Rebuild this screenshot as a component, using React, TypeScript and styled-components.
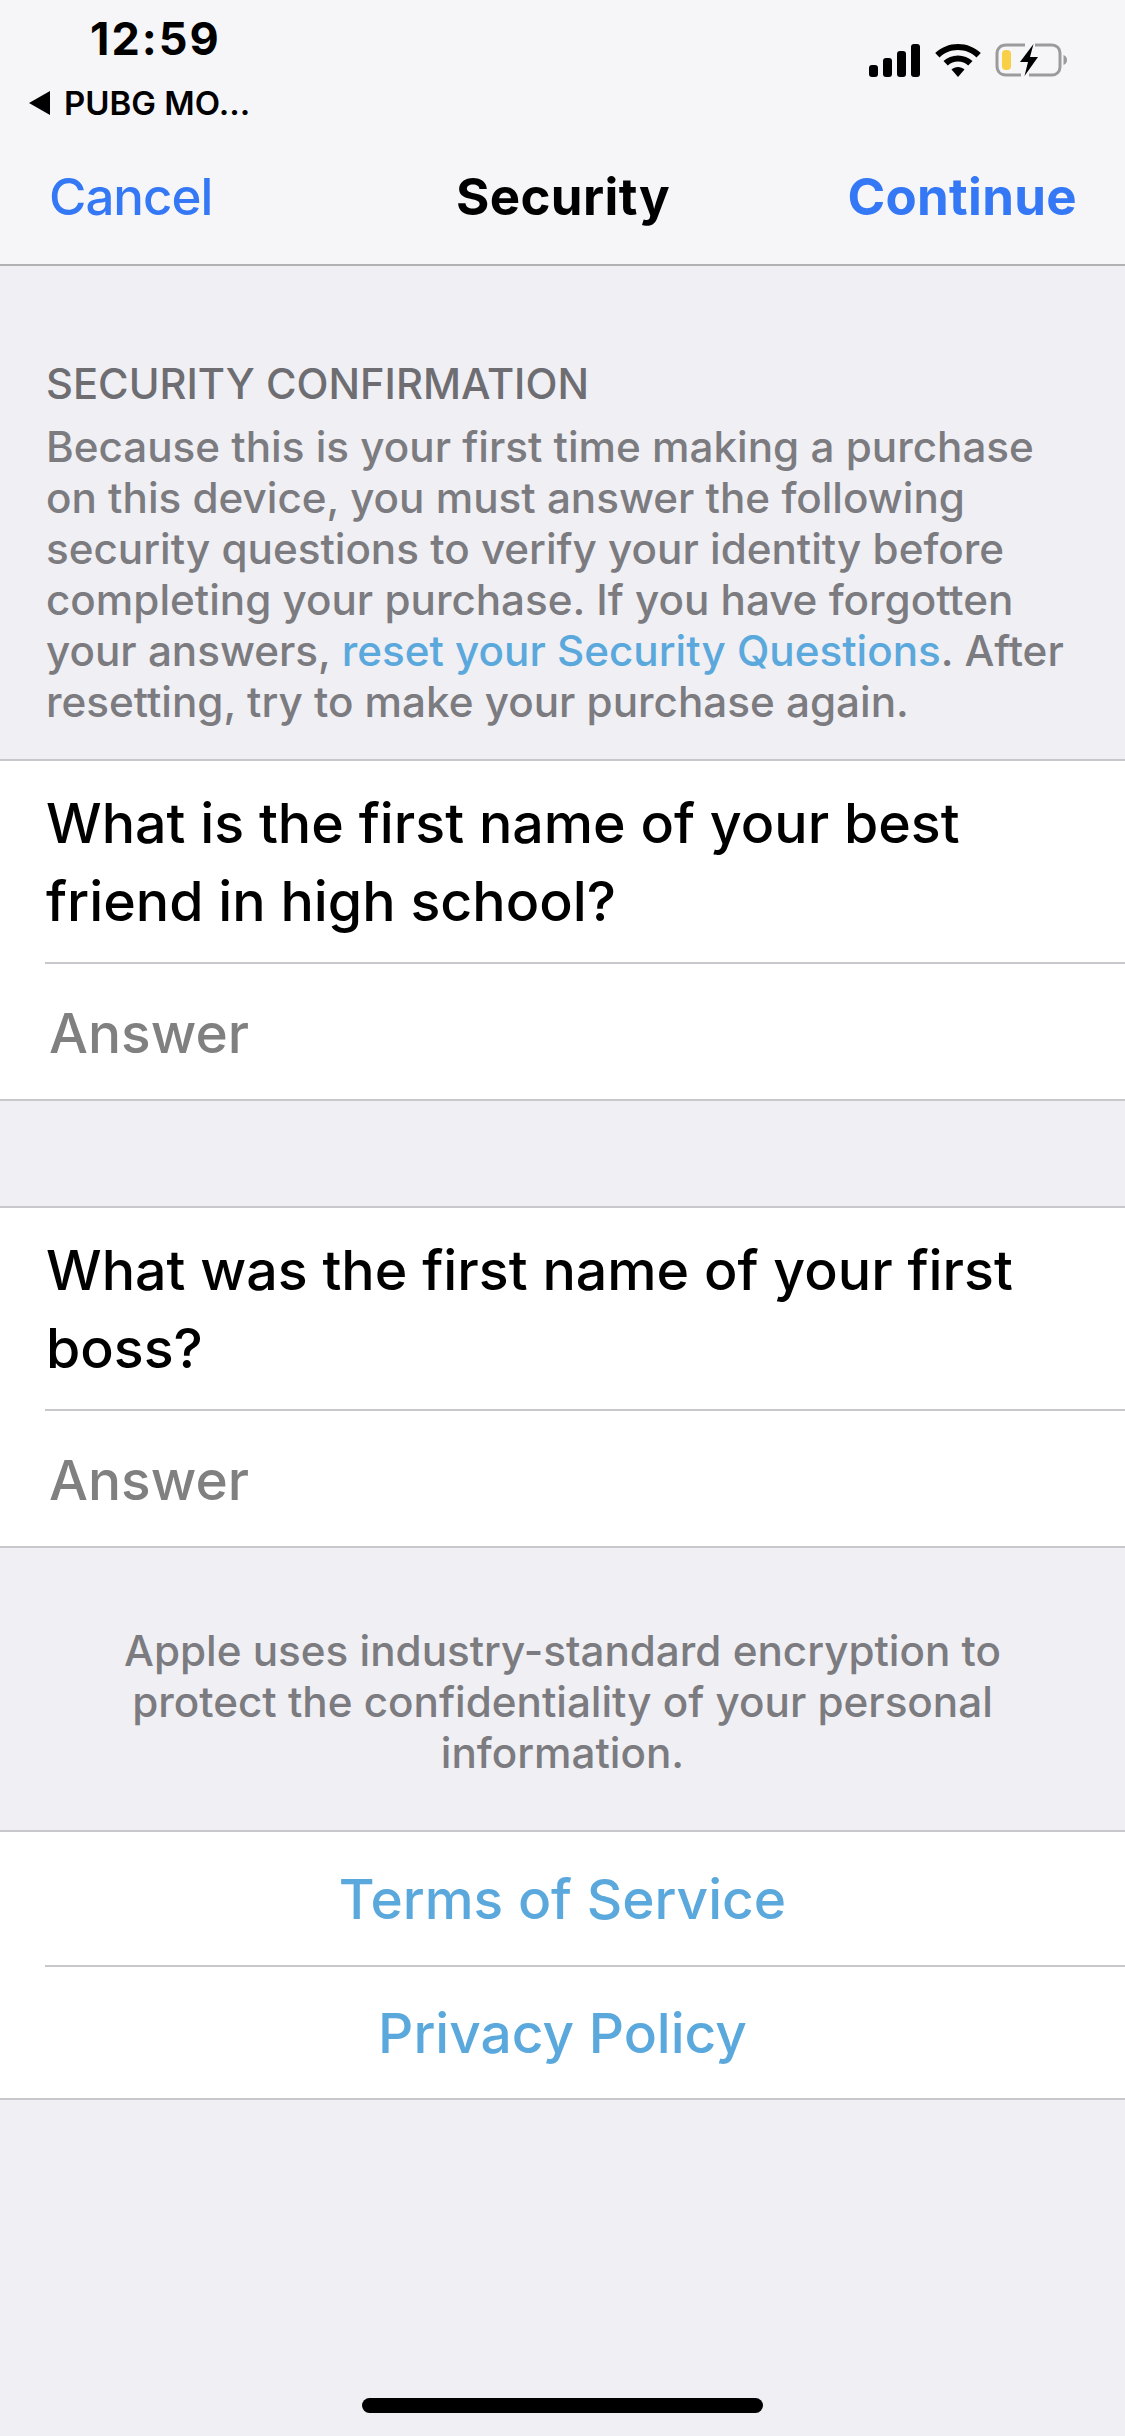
import React from 'react';
import styled, { createGlobalStyle } from 'styled-components';

const GlobalStyle = createGlobalStyle`
	html,
	body {
		margin: 0;
		padding: 0;
		background: #efeff4;
	}
	* {
		box-sizing: border-box;
	}
`;

const questions = ['What is the first name of your best friend in high school?', 'What was the first name of your first boss?'];

const App = () => {
	return (
		<Wrapper>
			<GlobalStyle />
			<TopBars>
				<StatusBar>
					<StatusLeft>
						<Time>12:59</Time>
						<BackLink>
							<svg width="23" height="24" viewBox="0 0 23 24">
								<path d="M22 0v24L1 12z" fill="#000" />
							</svg>
							PUBG MO...
						</BackLink>
					</StatusLeft>
					<StatusIcons>
						<svg width="52" height="33" viewBox="0 0 52 33" fill="#000">
							<rect x="0" y="21" width="9" height="12" rx="3" />
							<rect x="14" y="14" width="9" height="19" rx="3" />
							<rect x="28" y="7" width="9" height="26" rx="3" />
							<rect x="42" y="0" width="9" height="33" rx="3" />
						</svg>
						<svg width="46" height="33" viewBox="0 0 46 33" fill="#000">
							<path d="M23 0c8.800 0 16.800 3.400 22.800 9l-4.300 4.400C36.700 8.900 30.200 6.100 23 6.100S9.300 8.900 4.500 13.400L.2 9C6.200 3.400 14.200 0 23 0z" />
							<path d="M23 11.400c5.600 0 10.700 2.200 14.500 5.700l-4.300 4.400c-2.700-2.400-6.300-3.900-10.200-3.900s-7.500 1.500-10.200 3.900l-4.300-4.400c3.800-3.500 8.900-5.700 14.500-5.700z" />
							<path d="M23 23c2.500 0 4.800.9 6.500 2.500L23 33l-6.500-7.500C18.200 23.900 20.500 23 23 23z" />
						</svg>
						<svg width="72" height="34" viewBox="0 0 72 34">
							<path d="M30 2H11C5.500 2 2 5.500 2 11v12c0 5.500 3.500 9 9 9h15M40 2h17c4.500 0 8 3.500 8 8v14c0 4.500-3.500 8-8 8H34" fill="none" stroke="#9b9b9b" strokeWidth="3" />
							<path d="M68.500 12c2 .8 3.500 2.500 3.500 5s-1.500 4.200-3.500 5z" fill="#9b9b9b" />
							<rect x="7" y="7" width="9" height="20" rx="4" fill="#f8d045" />
							<path d="M38.500 1 25 19h8l-3.500 14L43 14h-8z" fill="#000" />
						</svg>
					</StatusIcons>
				</StatusBar>
				<NavBar>
					<NavAction>Cancel</NavAction>
					<NavTitle>Security</NavTitle>
					<NavAction $strong>Continue</NavAction>
				</NavBar>
			</TopBars>

			<Intro>
				<IntroHeading>SECURITY CONFIRMATION</IntroHeading>
				<IntroText>
					Because this is your first time making a purchase on this device, you must answer the following security questions to verify your identity before completing your purchase. If you have forgotten your answers, <InlineLink>reset your Security Questions</InlineLink>. After resetting, try to make your purchase again.
				</IntroText>
			</Intro>

			<QuestionList>
				{questions.map((question) => (
					<Group key={question}>
						<Question>{question}</Question>
						<AnswerRow>
							<Answer>Answer</Answer>
						</AnswerRow>
					</Group>
				))}
			</QuestionList>

			<Notice>Apple uses industry-standard encryption to protect the confidentiality of your personal information.</Notice>

			<Group>
				<LinkRow>Terms of Service</LinkRow>
				<LinkRow $divider>Privacy Policy</LinkRow>
			</Group>

			<HomeArea>
				<HomeIndicator />
			</HomeArea>
		</Wrapper>
	);
};

const Wrapper = styled.div`
	width: 1125px;
	height: 2436px;
	overflow: hidden;
	display: flex;
	flex-direction: column;
	background: #efeff4;
	color: #000;
	font-family: Inter, 'Liberation Sans', sans-serif;
`;

const TopBars = styled.div`
	height: 266px;
	background: #f6f6f8;
	border-bottom: 2px solid #b2b2b4;
`;

const StatusBar = styled.div`
	height: 133px;
	display: flex;
	justify-content: space-between;
	align-items: flex-start;
	padding: 16px 58px 0 28px;
`;

const StatusLeft = styled.div`
	display: flex;
	flex-direction: column;
	align-items: flex-start;
`;

const Time = styled.div`
	margin-left: 62px;
	font-size: 45px;
	line-height: 46px;
	font-weight: 700;
	letter-spacing: 2px;
`;

const BackLink = styled.div`
	display: flex;
	align-items: center;
	gap: 13px;
	margin-top: 23px;
	font-size: 33px;
	line-height: 36px;
	font-weight: 600;
`;

const StatusIcons = styled.div`
	display: flex;
	align-items: center;
	gap: 14px;
	margin-top: 27px;
`;

const NavBar = styled.div`
	height: 131px;
	display: grid;
	grid-template-columns: 1fr auto 1fr;
	align-items: center;
	padding: 0 48px 0 49px;
`;

const NavAction = styled.div<{ $strong?: boolean }>`
	justify-self: ${({ $strong }) => ($strong ? 'end' : 'start')};
	margin-bottom: 4px;
	font-size: 51px;
	line-height: 60px;
	font-weight: ${({ $strong }) => ($strong ? 700 : 500)};
	letter-spacing: ${({ $strong }) => ($strong ? '0.3px' : '-1px')};
	color: #3478f6;
`;

const NavTitle = styled.div`
	margin-bottom: 4px;
	font-size: 51px;
	line-height: 60px;
	font-weight: 700;
	letter-spacing: 0.4px;
`;

const Intro = styled.div`
	height: 493px;
	padding: 95px 46px 0;
`;

const IntroHeading = styled.div`
	font-size: 41.7px;
	line-height: 47px;
	font-weight: 500;
	color: #6d6d72;
`;

const IntroText = styled.div`
	margin-top: 13px;
	font-size: 42.2px;
	line-height: 51px;
	font-weight: 500;
	color: #7b7b80;
`;

const InlineLink = styled.span`
	color: #5aa8dc;
`;

const QuestionList = styled.div`
	display: flex;
	flex-direction: column;
	gap: 105px;
`;

const Group = styled.div`
	background: #fff;
	border-top: 2px solid #c8c7cc;
	border-bottom: 2px solid #c8c7cc;
`;

const Question = styled.div`
	padding: 23px 46px 22px;
	font-size: 55.5px;
	line-height: 78px;
	font-weight: 500;
`;

const AnswerRow = styled.div`
	margin-left: 45px;
	height: 137px;
	display: flex;
	align-items: center;
	padding-top: 3px;
	border-top: 2px solid #c8c7cc;
`;

const Answer = styled.div`
	margin-left: 4px;
	font-size: 55px;
	line-height: 60px;
	font-weight: 500;
	color: #808080;
`;

const Notice = styled.div`
	height: 282px;
	padding: 77px 100px 0;
	font-size: 42.2px;
	line-height: 51px;
	font-weight: 500;
	text-align: center;
	color: #7b7b80;
`;

const LinkRow = styled.div<{ $divider?: boolean }>`
	height: 133px;
	display: flex;
	align-items: center;
	justify-content: center;
	font-size: 55px;
	line-height: 60px;
	font-weight: 500;
	color: #5aa8dc;
	position: relative;
	${({ $divider }) =>
		$divider &&
		`
		padding-top: 2px;
		&::before {
			content: '';
			position: absolute;
			top: 0;
			left: 45px;
			right: 0;
			height: 2px;
			background: #c8c7cc;
		}
	`}
`;

const HomeArea = styled.div`
	flex: 1;
	display: flex;
	align-items: flex-end;
	justify-content: center;
	padding-bottom: 23px;
`;

const HomeIndicator = styled.div`
	width: 401px;
	height: 15px;
	border-radius: 8px;
	background: #000;
`;

export default App;
